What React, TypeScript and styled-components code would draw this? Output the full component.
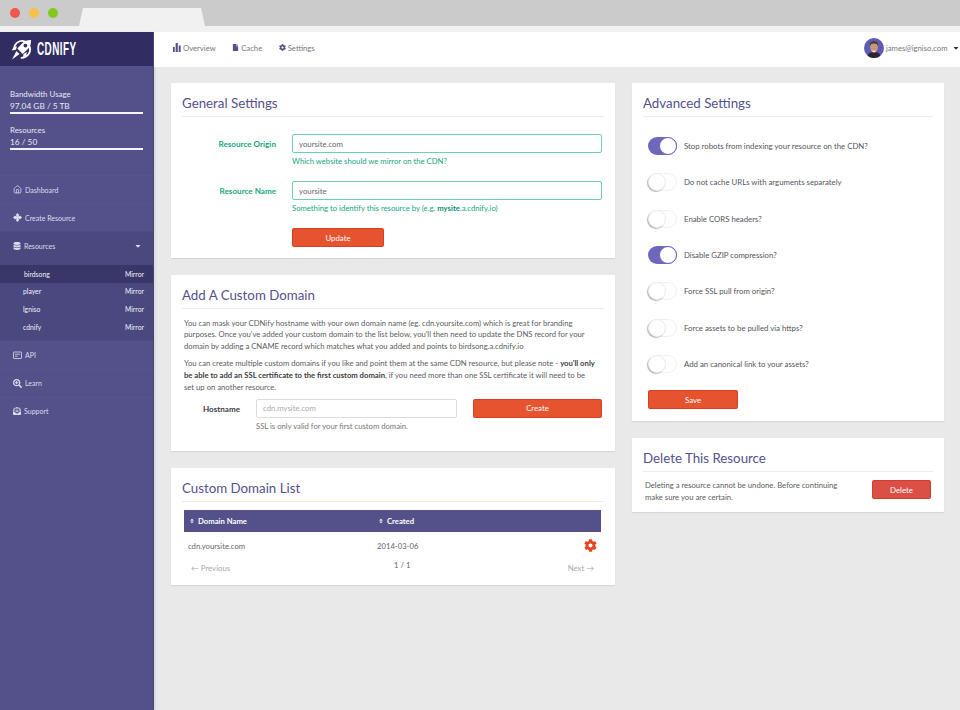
import React from 'react';
import styled, { createGlobalStyle } from 'styled-components';
import { FaCaretDown, FaCog, FaDatabase, FaEnvelopeOpenText, FaFile, FaSearchPlus, FaSort } from 'react-icons/fa';
import { Home } from 'lucide-react';

const purple = '#54508a';
const green = '#18a683';
const red = '#e5532f';

const GlobalStyle = createGlobalStyle`
  html, body {
    margin: 0;
    padding: 0;
    background: #e9e9e9;
  }
  body {
    font-family: 'Lato', 'Open Sans', sans-serif;
    font-size: 7.8px;
    color: #55555c;
    -webkit-font-smoothing: antialiased;
  }
  * {
    box-sizing: border-box;
  }
`;

const Page = styled.div`
  width: 960px;
  height: 710px;
  overflow: hidden;
  display: flex;
  flex-direction: column;
`;

const Chrome = styled.div`
  height: 32px;
  flex: none;
  background: #cbcbcb;
  border-bottom: 6px solid #f1f1f1;
  display: flex;
  align-items: flex-start;
  padding: 8px 0 0 10px;
`;

const Dot = styled.span<{ $colour: string }>`
  width: 10px;
  height: 10px;
  margin-right: 9px;
  border-radius: 50%;
  background: ${({ $colour }) => $colour};
`;

const ChromeTab = styled.div`
  width: 126px;
  height: 18px;
  margin-left: 12px;
  background: #f1f1f1;
  clip-path: polygon(0 100%, 4px 0, 122px 0, 100% 100%);
`;

const Body = styled.div`
  flex: 1;
  display: flex;
  min-height: 0;
`;

const Sidebar = styled.aside`
  width: 154px;
  flex: none;
  background: ${purple};
  color: #e4e3f0;
  border-right: 1px solid #47437c;
  box-shadow: 2px 0 2px rgba(0, 0, 0, 0.06);
`;

const Brand = styled.div`
  height: 34px;
  background: #312d63;
  display: flex;
  align-items: center;
  padding-left: 11px;
  gap: 5px;
`;

const BrandName = styled.span`
  font-family: 'Liberation Sans', sans-serif;
  font-size: 18px;
  font-weight: 700;
  color: #fff;
  letter-spacing: 0.8px;
  transform: scaleX(0.55);
  transform-origin: left center;
`;

const Stats = styled.div`
  padding: 22px 10px 0 10px;
  height: 109px;
`;

const StatLabel = styled.div`
  font-size: 7.9px;
  line-height: 12px;
  color: #e8e7f2;
`;

const StatValue = styled(StatLabel)`
  font-size: 8.3px;
`;

const StatBar = styled.div`
  height: 2px;
  margin: 0 0 10px;
  background: #f4f4f8;
`;

const NavItem = styled.div<{ $open?: boolean }>`
  height: 28px;
  display: flex;
  align-items: center;
  gap: 3px;
  padding: 0 11px 0 13px;
  font-size: 7px;
  color: #dddcec;
  border-top: 1px solid rgba(255, 255, 255, 0.025);
  background: ${({ $open }) => ($open ? '#4b477f' : 'transparent')};
  svg {
    flex: none;
  }
`;

const NavText = styled.span`
  flex: 1;
`;

const SubList = styled.div`
  background: #4b477f;
  padding: 6px 0 5.6px;
`;

const SubRow = styled.div<{ $active?: boolean }>`
  height: 17.6px;
  display: flex;
  align-items: center;
  justify-content: space-between;
  padding: 0 9px 0 ${({ $active }) => ($active ? '24px' : '23px')};
  font-size: 6.8px;
  color: #f0eff7;
  background: ${({ $active }) => ($active ? '#3a3669' : 'transparent')};
`;

const Main = styled.main`
  flex: 1;
  min-width: 0;
`;

const TopNav = styled.nav`
  height: 35px;
  background: #fff;
  display: flex;
  align-items: center;
  padding: 0 0 4px 19px;
`;

const TopLink = styled.a`
  display: flex;
  align-items: center;
  gap: 2px;
  margin-right: 16.5px;
  font-size: 7.7px;
  color: #77777c;
  svg {
    color: #54508a;
  }
`;

const UserMenu = styled.div`
  margin-left: auto;
  display: flex;
  align-items: center;
  gap: 1.5px;
  font-size: 7.7px;
  color: #77777c;
  svg:last-child {
    margin-left: 3px;
    color: #333;
  }
`;

const Columns = styled.div`
  display: flex;
  gap: 17px;
  padding: 16px 16px 0 17px;
`;

const Column = styled.div<{ $width: number }>`
  width: ${({ $width }) => $width}px;
  display: flex;
  flex-direction: column;
  gap: 17px;
`;

const Card = styled.section<{ $height: number }>`
  height: ${({ $height }) => $height}px;
  background: #fff;
  padding: 0 11px;
  box-shadow: 0 1px 1px rgba(0, 0, 0, 0.08);
`;

const CardTitle = styled.h2`
  margin: 0;
  height: 34px;
  padding: 12px 0 0;
  font-size: 13.3px;
  line-height: 17px;
  font-weight: 400;
  color: #55518d;
  border-bottom: 1px solid #ececec;
`;

const FormRow = styled.div`
  display: flex;
  gap: 16px;
`;

const FieldLabel = styled.label<{ $colour: string; $width: number }>`
  width: ${({ $width }) => $width}px;
  flex: none;
  text-align: right;
  padding-top: 5px;
  font-size: 8.1px;
  font-weight: 700;
  color: ${({ $colour }) => $colour};
`;

const Field = styled.div`
  flex: 1;
`;

const TextBox = styled.input<{ $valid?: boolean }>`
  display: block;
  width: 100%;
  height: 19px;
  padding: 0 6px;
  border-radius: 2px;
  outline: none;
  font: inherit;
  font-size: 7.8px;
  color: #66666b;
  background: #fff;
  border: ${({ $valid }) => ($valid ? '1.5px solid #6dcdb5' : '1px solid #dcdcdc')};
  &::placeholder {
    color: #aaa;
  }
`;

const Hint = styled.div<{ $valid?: boolean }>`
  margin-top: 3px;
  font-size: 7.7px;
  line-height: 11px;
  color: ${({ $valid }) => ($valid ? green : '#77777c')};
  b {
    color: #0f8f70;
  }
`;

const GeneralForm = styled.div`
  padding: 17px 2px 0 0;
  display: flex;
  flex-direction: column;
  gap: 14px;
`;

const Button = styled.button<{ $width: number; $colour?: string }>`
  width: ${({ $width }) => $width}px;
  height: 19px;
  padding: 0;
  flex: none;
  border: 1px solid rgba(200, 50, 30, 0.55);
  border-radius: 2px;
  font: inherit;
  font-size: 7.8px;
  color: #fff;
  background: ${({ $colour }) => $colour ?? red};
`;

const UpdateRow = styled.div`
  padding-left: 110px;
`;

const Copy = styled.p`
  margin: 0 0 5.2px;
  padding: 0 2px;
  font-size: 7.7px;
  line-height: 11.8px;
  color: #5c5c62;
  b {
    color: #3c3c42;
  }
`;

const CopyBlock = styled.div`
  padding-top: 8.5px;
`;

const HostRow = styled.div`
  display: flex;
  gap: 16px;
  margin-top: 3.5px;
  padding-right: 2px;
`;

const HostField = styled.div`
  width: 201px;
  flex: none;
`;

const DomainTable = styled.div`
  margin: 8px 3px 0 2px;
`;

const TableHead = styled.div`
  height: 22px;
  display: grid;
  grid-template-columns: 189px 1fr;
  align-items: center;
  background: ${purple};
  color: #fff;
  font-size: 7.7px;
  font-weight: 700;
`;

const HeadCell = styled.div`
  display: flex;
  align-items: center;
  gap: 3px;
  padding-left: 5px;
  svg {
    opacity: 0.85;
  }
`;

const TableRow = styled.div`
  height: 27px;
  display: grid;
  grid-template-columns: 189px 1fr 13px;
  align-items: center;
  font-size: 7.7px;
  color: #66666b;
  padding: 0 4px;
`;

const Pager = styled.div`
  display: grid;
  grid-template-columns: 189px 1fr auto;
  margin-top: 4px;
  padding: 0 7px;
  font-size: 7.8px;
  color: #a8a8ac;
`;

const PageCount = styled.span`
  color: #66666b;
  margin-top: -3px;
  padding-left: 14px;
`;

const ToggleList = styled.div`
  padding-top: 11px;
`;

const ToggleRow = styled.div`
  height: 36.3px;
  display: flex;
  align-items: center;
  gap: 7px;
  padding-left: 5px;
  font-size: 7.8px;
  color: #55555c;
`;

const Track = styled.span<{ $on?: boolean }>`
  position: relative;
  width: 29px;
  height: 18px;
  flex: none;
  border-radius: 9px;
  background: ${({ $on }) => ($on ? '#6f67bc' : '#fff')};
  box-shadow: ${({ $on }) => ($on ? 'none' : 'inset 0 0 0 1px #f1f1f1')};
`;

const Knob = styled.span<{ $on?: boolean }>`
  position: absolute;
  top: 0;
  ${({ $on }) => ($on ? 'right: 0;' : 'left: 0;')}
  width: 18px;
  height: 18px;
  border-radius: 50%;
  background: #fff;
  border: 1px solid ${({ $on }) => ($on ? '#6f67bc' : '#ececec')};
  box-shadow: ${({ $on }) => ($on ? 'none' : '-1px 1px 1px rgba(0, 0, 0, 0.28)')};
`;

const SaveRow = styled.div`
  padding: 8px 0 0 5px;
`;

const DeleteRow = styled.div`
  display: flex;
  align-items: flex-start;
  justify-content: space-between;
  padding: 8px 2px 0 2px;
`;

const DeleteText = styled(Copy)`
  width: 205px;
  margin: 0;
  padding: 0;
`;

const RocketLogo = () => (
  <svg width="21" height="21" viewBox="0 0 21 21" fill="none">
    <path d="M3.5 7.5A8 8 0 0 1 16 3.5" stroke="#fff" strokeWidth="1.8" strokeLinecap="round" />
    <path d="M18.8 8A8.5 8.5 0 0 1 10.5 18.8" stroke="#fff" strokeWidth="1.8" strokeLinecap="round" />
    <path
      d="M20 1c.4 3.4-.8 6.8-3.3 9.3l-5 4.7-5.4-5.4 4.700-5C13.400 2.100 16.700.7 20 1zm-5.600 3.700a1.900 1.900 0 1 0 0 3.800 1.900 1.900 0 0 0 0-3.800z"
      fill="#fff"
    />
    <path d="M6 7.500 2.500 8 .8 11.500l4-.8zM12.500 15l-.5 3.800 3.200-1.800.6-4zM5.500 12l3 3-7.500 5.500z" fill="#fff" />
  </svg>
);

const BarsIcon = () => (
  <svg width="8" height="9" viewBox="0 0 9 9" fill="#54508a" preserveAspectRatio="none">
    <rect x="0" y="4" width="2" height="5" />
    <rect x="3" y="0" width="2.4" height="9" />
    <rect x="6.4" y="2.5" width="2.2" height="6.5" />
  </svg>
);

const MoveIcon = () => (
  <svg width="9" height="9" viewBox="0 0 10 10" fill="#dddcec">
    <path d="M5 0 7 2.200 5.500 4 8 3l2 2-2 2-2.500-1L7 7.800 5 10 3 7.800 4.500 6 2 7 0 5l2-2 2.500 1L3 2.200z" />
  </svg>
);

const ApiIcon = () => (
  <svg width="9" height="9" viewBox="0 0 9 9" fill="none" stroke="#dddcec" strokeWidth="0.8">
    <rect x="0.5" y="1" width="8" height="6.5" rx="0.5" />
    <path d="M2 3.200h5M2 5.200h2.500" />
  </svg>
);

const Avatar = () => (
  <svg width="20" height="20" viewBox="0 0 20 20">
    <circle cx="10" cy="10" r="10" fill="#5f5ab4" />
    <path d="M3.500 17.700c1-2.700 3.500-3.700 6.500-3.700s5.500 1 6.500 3.700A10 10 0 0 1 10 20a10 10 0 0 1-6.500-2.300z" fill="#2b2730" />
    <ellipse cx="10" cy="9.3" rx="3.9" ry="5.4" fill="#c79877" />
    <path d="M6 8.300C5.500 4.500 7.500 3.300 10 3.300s4.500 1.200 4 5c-.5-2-1.500-2.700-4-2.700S6.500 6.300 6 8.300z" fill="#4e3a2c" />
    <path d="M7.800 12.200c1.300.8 3 .8 4.400 0-.4 1.300-1.200 1.800-2.200 1.800s-1.800-.5-2.200-1.800z" fill="#f3e5db" />
  </svg>
);

const toggles: [string, boolean][] = [
  ['Stop robots from indexing your resource on the CDN?', true],
  ['Do not cache URLs with arguments separately', false],
  ['Enable CORS headers?', false],
  ['Disable GZIP compression?', true],
  ['Force SSL pull from origin?', false],
  ['Force assets to be pulled via https?', false],
  ['Add an canonical link to your assets?', false],
];

const resources = ['birdsong', 'player', 'lgniso', 'cdnify'];

const App: React.FC = () => {
  return (
    <Page>
      <GlobalStyle />
      <Chrome>
        <Dot $colour="#f2574f" />
        <Dot $colour="#f6c04a" />
        <Dot $colour="#83c81f" />
        <ChromeTab />
      </Chrome>
      <Body>
        <Sidebar>
          <Brand>
            <RocketLogo />
            <BrandName>CDNIFY</BrandName>
          </Brand>
          <Stats>
            <StatLabel>Bandwidth Usage</StatLabel>
            <StatValue>97.04 GB / 5 TB</StatValue>
            <StatBar />
            <StatLabel>Resources</StatLabel>
            <StatValue>16 / 50</StatValue>
            <StatBar />
          </Stats>
          <NavItem>
            <Home size={9} />
            <NavText>Dashboard</NavText>
          </NavItem>
          <NavItem>
            <MoveIcon />
            <NavText>Create Resource</NavText>
          </NavItem>
          <NavItem $open>
            <FaDatabase size={8} />
            <NavText>Resources</NavText>
            <FaCaretDown size={8} />
          </NavItem>
          <SubList>
            {resources.map((name, index) => (
              <SubRow key={name} $active={index === 0}>
                <span>{name}</span>
                <span>Mirror</span>
              </SubRow>
            ))}
          </SubList>
          <NavItem>
            <ApiIcon />
            <NavText>API</NavText>
          </NavItem>
          <NavItem>
            <FaSearchPlus size={9} />
            <NavText>Learn</NavText>
          </NavItem>
          <NavItem>
            <FaEnvelopeOpenText size={8} />
            <NavText>Support</NavText>
          </NavItem>
        </Sidebar>
        <Main>
          <TopNav>
            <TopLink>
              <BarsIcon />
              Overview
            </TopLink>
            <TopLink>
              <FaFile size={7} />
              Cache
            </TopLink>
            <TopLink>
              <FaCog size={7} />
              Settings
            </TopLink>
            <UserMenu>
              <Avatar />
              james@igniso.com
              <FaCaretDown size={8} />
            </UserMenu>
          </TopNav>
          <Columns>
            <Column $width={444}>
              <Card $height={175}>
                <CardTitle>General Settings</CardTitle>
                <GeneralForm>
                  <FormRow>
                    <FieldLabel $colour={green} $width={94}>Resource Origin</FieldLabel>
                    <Field>
                      <TextBox $valid defaultValue="yoursite.com" />
                      <Hint $valid>Which website should we mirror on the CDN?</Hint>
                    </Field>
                  </FormRow>
                  <FormRow>
                    <FieldLabel $colour={green} $width={94}>Resource Name</FieldLabel>
                    <Field>
                      <TextBox $valid defaultValue="yoursite" />
                      <Hint $valid>
                        Something to identify this resource by (e.g. <b>mysite</b>.a.cdnify.io)
                      </Hint>
                    </Field>
                  </FormRow>
                  <UpdateRow>
                    <Button $width={92}>Update</Button>
                  </UpdateRow>
                </GeneralForm>
              </Card>
              <Card $height={176}>
                <CardTitle>Add A Custom Domain</CardTitle>
                <CopyBlock>
                  <Copy>
                    You can mask your CDNify hostname with your own domain name (eg. cdn.yoursite.com) which is great
                    for branding
                    <br />
                    purposes. Once you've added your custom domain to the list below, you'll then need to update the
                    DNS record for your
                    <br />
                    domain by adding a CNAME record which matches what you added and points to birdsong.a.cdnify.io
                  </Copy>
                  <Copy>
                    You can create multiple custom domains if you like and point them at the same CDN resource, but
                    please note - <b>you'll only</b>
                    <br />
                    <b>be able to add an SSL certificate to the first custom domain</b>, if you need more than one SSL
                    certificate it will need to be
                    <br />
                    set up on another resource.
                  </Copy>
                </CopyBlock>
                <HostRow>
                  <FieldLabel $colour="#3c3c42" $width={58}>Hostname</FieldLabel>
                  <HostField>
                    <TextBox placeholder="cdn.mysite.com" />
                    <Hint>SSL is only valid for your first custom domain.</Hint>
                  </HostField>
                  <Button $width={129}>Create</Button>
                </HostRow>
              </Card>
              <Card $height={117}>
                <CardTitle>Custom Domain List</CardTitle>
                <DomainTable>
                  <TableHead>
                    <HeadCell>
                      <FaSort size={6} />
                      Domain Name
                    </HeadCell>
                    <HeadCell>
                      <FaSort size={6} />
                      Created
                    </HeadCell>
                  </TableHead>
                  <TableRow>
                    <span>cdn.yoursite.com</span>
                    <span>2014-03-06</span>
                    <FaCog size={13} color="#e8431f" />
                  </TableRow>
                  <Pager>
                    <span>← Previous</span>
                    <PageCount>1 / 1</PageCount>
                    <span>Next →</span>
                  </Pager>
                </DomainTable>
              </Card>
            </Column>
            <Column $width={312}>
              <Card $height={338}>
                <CardTitle>Advanced Settings</CardTitle>
                <ToggleList>
                  {toggles.map(([label, on]) => (
                    <ToggleRow key={label}>
                      <Track $on={on}>
                        <Knob $on={on} />
                      </Track>
                      {label}
                    </ToggleRow>
                  ))}
                </ToggleList>
                <SaveRow>
                  <Button $width={90}>Save</Button>
                </SaveRow>
              </Card>
              <Card $height={74}>
                <CardTitle>Delete This Resource</CardTitle>
                <DeleteRow>
                  <DeleteText>
                    Deleting a resource cannot be undone. Before continuing make sure you are certain.
                  </DeleteText>
                  <Button $width={59} $colour="#dc4f47">Delete</Button>
                </DeleteRow>
              </Card>
            </Column>
          </Columns>
        </Main>
      </Body>
    </Page>
  );
};

export default App;
